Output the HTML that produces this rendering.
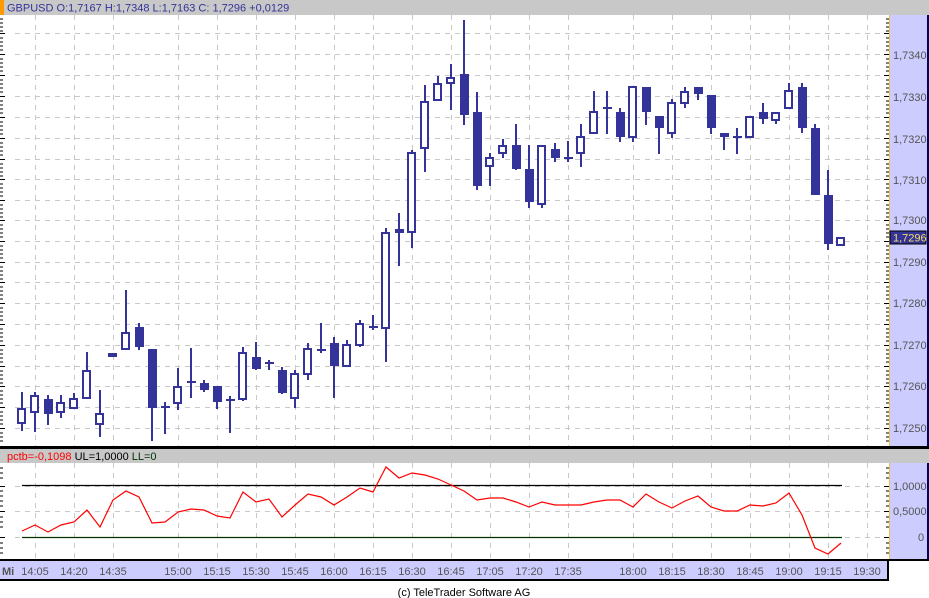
<!DOCTYPE html>
<html><head><meta charset="utf-8"><style>
body{margin:0;width:929px;height:598px;background:#fff;overflow:hidden;font-family:"Liberation Sans",sans-serif;}
</style></head><body>
<svg width="929" height="598" xmlns="http://www.w3.org/2000/svg" style="position:absolute;left:0;top:0">
<!-- header bars -->
<rect x="0" y="0" width="929" height="15" fill="#c8c8c8"/>
<rect x="0" y="0" width="4" height="15" fill="#ff9900"/>
<text x="7" y="11.5" font-size="11" fill="#333399" font-family="Liberation Sans">GBPUSD O:1,7167 H:1,7348 L:1,7163 C: 1,7296 +0,0129</text>
<!-- right axis -->
<rect x="889" y="15" width="38" height="432" fill="#ccccff"/>
<rect x="889" y="463" width="38" height="97" fill="#ccccff"/>
<line x1="889.5" y1="15" x2="889.5" y2="447" stroke="#f0c040"/>
<line x1="889.5" y1="463" x2="889.5" y2="560" stroke="#f0c040"/>
<rect x="927" y="15" width="2" height="546" fill="#000066"/>
<!-- grid -->
<g stroke="#c8c8c8" stroke-dasharray="5,5" stroke-width="1">
<path d="M15 33.5H888M15 54.5H888M15 75.5H888M15 96.5H888M15 117.5H888M15 138.5H888M15 159.5H888M15 179.5H888M15 200.5H888M15 220.5H888M15 241.5H888M15 262.5H888M15 282.5H888M15 303.5H888M15 324.5H888M15 345.5H888M15 366.5H888M15 386.5H888M15 407.5H888M15 428.5H888"/>
<path d="M15 486.5H888M15 511.5H888M15 537.5H888"/>
<path d="M35.5 15V446M74.5 15V446M113.5 15V446M178.5 15V446M217.5 15V446M256.5 15V446M295.5 15V446M334.5 15V446M373.5 15V446M412.5 15V446M451.5 15V446M490.5 15V446M529.5 15V446M568.5 15V446M633.5 15V446M672.5 15V446M711.5 15V446M750.5 15V446M789.5 15V446M828.5 15V446M867.5 15V446"/>
<path d="M35.5 463V560M74.5 463V560M113.5 463V560M178.5 463V560M217.5 463V560M256.5 463V560M295.5 463V560M334.5 463V560M373.5 463V560M412.5 463V560M451.5 463V560M490.5 463V560M529.5 463V560M568.5 463V560M633.5 463V560M672.5 463V560M711.5 463V560M750.5 463V560M789.5 463V560M828.5 463V560M867.5 463V560"/>
</g>
<!-- left ticks -->
<g stroke="#000" stroke-width="1">
<path d="M0 19H3M0 23H3M0 27H3M0 31H3M0 33.5H5M0 38H3M0 42H3M0 46H3M0 50H3M0 54.5H5M0 59H3M0 63H3M0 67H3M0 71H3M0 75.5H5M0 80H3M0 84H3M0 88H3M0 92H3M0 96.5H5M0 101H3M0 105H3M0 109H3M0 113H3M0 117.5H5M0 122H3M0 126H3M0 130H3M0 134H3M0 138.5H5M0 143H3M0 147H3M0 151H3M0 155H3M0 159.5H5M0 164H3M0 168H3M0 172H3M0 176H3M0 179.5H5M0 184H3M0 188H3M0 192H3M0 196H3M0 200.5H5M0 205H3M0 209H3M0 213H3M0 217H3M0 220.5H5M0 225H3M0 229H3M0 233H3M0 237H3M0 241.5H5M0 246H3M0 250H3M0 254H3M0 258H3M0 262.5H5M0 267H3M0 271H3M0 275H3M0 279H3M0 282.5H5M0 287H3M0 291H3M0 295H3M0 299H3M0 303.5H5M0 308H3M0 312H3M0 316H3M0 320H3M0 324.5H5M0 329H3M0 333H3M0 337H3M0 341H3M0 345.5H5M0 350H3M0 354H3M0 358H3M0 362H3M0 366.5H5M0 371H3M0 375H3M0 379H3M0 383H3M0 386.5H5M0 391H3M0 395H3M0 399H3M0 403H3M0 407.5H5M0 412H3M0 416H3M0 420H3M0 424H3M0 428.5H5M0 433H3M0 437H3M0 441H3"/>
<path d="M0 468H3M0 473H3M0 478H3M0 486.5H5M0 491H3M0 496H3M0 501H3M0 506H3M0 511.5H5M0 517H3M0 522H3M0 527H3M0 537.5H5M0 543H3M0 548H3M0 553H3"/>
<path d="M886 19H889M886 23H889M886 27H889M886 31H889M884 33.5H889M886 38H889M886 42H889M886 46H889M886 50H889M884 54.5H889M886 59H889M886 63H889M886 67H889M886 71H889M884 75.5H889M886 80H889M886 84H889M886 88H889M886 92H889M884 96.5H889M886 101H889M886 105H889M886 109H889M886 113H889M884 117.5H889M886 122H889M886 126H889M886 130H889M886 134H889M884 138.5H889M886 143H889M886 147H889M886 151H889M886 155H889M884 159.5H889M886 164H889M886 168H889M886 172H889M886 176H889M884 179.5H889M886 184H889M886 188H889M886 192H889M886 196H889M884 200.5H889M886 205H889M886 209H889M886 213H889M886 217H889M884 220.5H889M886 225H889M886 229H889M886 233H889M886 237H889M884 241.5H889M886 246H889M886 250H889M886 254H889M886 258H889M884 262.5H889M886 267H889M886 271H889M886 275H889M886 279H889M884 282.5H889M886 287H889M886 291H889M886 295H889M886 299H889M884 303.5H889M886 308H889M886 312H889M886 316H889M886 320H889M884 324.5H889M886 329H889M886 333H889M886 337H889M886 341H889M884 345.5H889M886 350H889M886 354H889M886 358H889M886 362H889M884 366.5H889M886 371H889M886 375H889M886 379H889M886 383H889M884 386.5H889M886 391H889M886 395H889M886 399H889M886 403H889M884 407.5H889M886 412H889M886 416H889M886 420H889M886 424H889M884 428.5H889M886 433H889M886 437H889M886 441H889"/>
<path d="M886 468H889M886 473H889M886 478H889M884 486.5H889M886 491H889M886 496H889M886 501H889M886 506H889M884 511.5H889M886 517H889M886 522H889M886 527H889M884 537.5H889M886 543H889M886 548H889M886 553H889"/>
</g>
<!-- axis labels -->
<g font-size="11" fill="#555" font-family="Liberation Sans">
<text x="893" y="59">1,7340</text><text x="893" y="101">1,7330</text><text x="893" y="143">1,7320</text><text x="893" y="184">1,7310</text><text x="893" y="224">1,7300</text><text x="893" y="266">1,7290</text><text x="893" y="307">1,7280</text><text x="893" y="349">1,7270</text><text x="893" y="390">1,7260</text><text x="893" y="432">1,7250</text>
<text x="893" y="490">1,0000</text><text x="893" y="515">0,5000</text><text x="918" y="541">0</text>
</g>
<rect x="890" y="231" width="36" height="13" fill="#333399" stroke="#000" stroke-width="1"/>
<text x="893" y="241.5" font-size="11" fill="#f0e060" font-family="Liberation Sans">1,7296</text>
<!-- candles -->
<g fill="#333399" stroke="none">
<!-- wicks -->
<path d="M21 392h2v39h-2zM34 392h2v40h-2zM47 395h2v30h-2zM60 395h2v23h-2zM73 393h2v16h-2zM86 352h2v47h-2zM99 390h2v47h-2zM125 290h2v60h-2zM138 323h2v27h-2zM151 349h2v92h-2zM164 402h2v32h-2zM177 368h2v42h-2zM190 348h2v50h-2zM203 380h2v12h-2zM216 386h2v23h-2zM229 396h2v37h-2zM242 347h2v54h-2zM255 342h2v28h-2zM268 360h2v10h-2zM281 367h2v27h-2zM294 370h2v38h-2zM307 343h2v37h-2zM320 323h2v30h-2zM333 337h2v61h-2zM346 340h2v27h-2zM359 320h2v27h-2zM372 315h2v15h-2zM385 228h2v134h-2zM398 213h2v53h-2zM411 150h2v98h-2zM424 85h2v87h-2zM437 76h2v25h-2zM450 64h2v46h-2zM463 20h2v105h-2zM476 92h2v98h-2zM489 153h2v33h-2zM502 139h2v19h-2zM515 124h2v46h-2zM528 145h2v63h-2zM541 145h2v63h-2zM554 143h2v19h-2zM567 141h2v21h-2zM580 124h2v43h-2zM593 91h2v43h-2zM606 91h2v43h-2zM619 108h2v34h-2zM632 86h2v56h-2zM645 87h2v38h-2zM658 116h2v38h-2zM671 99h2v39h-2zM684 87h2v21h-2zM697 87h2v13h-2zM710 95h2v39h-2zM723 133h2v17h-2zM736 128h2v26h-2zM749 116h2v21h-2zM762 103h2v21h-2zM775 112h2v12h-2zM788 83h2v25h-2zM801 83h2v50h-2zM814 124h2v71h-2zM827 170h2v80h-2z"/>
<!-- filled bodies -->
<path d="M44 399h9v15h-9zM108 353h9v4h-9zM135 327h9v20h-9zM148 349h9v59h-9zM200 383h9v7h-9zM213 386h9v16h-9zM252 357h9v12h-9zM278 370h9v23h-9zM330 343h9v23h-9zM395 229h9v4h-9zM460 74h9v41h-9zM473 112h9v74h-9zM512 145h9v24h-9zM525 169h9v33h-9zM551 149h9v9h-9zM616 112h9v25h-9zM642 87h9v25h-9zM655 116h9v12h-9zM694 87h9v7h-9zM707 95h9v33h-9zM720 133h9v4h-9zM759 112h9v7h-9zM798 87h9v41h-9zM811 128h9v67h-9zM824 195h9v49h-9z"/>
<!-- dojis -->
<path d="M161 406h9v2h-9zM187 381h9v2h-9zM226 399h9v2h-9zM265 362h9v2h-9zM317 349h9v2h-9zM369 326h9v2h-9zM564 157h9v2h-9zM603 107h9v2h-9zM733 136h9v2h-9z"/>
</g>
<g fill="#fff" stroke="#333399" stroke-width="2">
<rect x="18" y="409" width="7" height="14"/><rect x="31" y="396" width="7" height="16"/><rect x="57" y="403" width="7" height="9"/><rect x="70" y="399" width="7" height="9"/><rect x="83" y="371" width="7" height="27"/><rect x="96" y="414" width="7" height="10"/><rect x="122" y="333" width="7" height="16"/><rect x="174" y="387" width="7" height="16"/><rect x="239" y="353" width="7" height="46"/><rect x="291" y="374" width="7" height="24"/><rect x="304" y="349" width="7" height="25"/><rect x="343" y="345" width="7" height="21"/><rect x="356" y="324" width="7" height="21"/><rect x="382" y="233" width="7" height="95"/><rect x="408" y="153" width="7" height="79"/><rect x="421" y="102" width="7" height="46"/><rect x="434" y="84" width="7" height="16"/><rect x="447" y="78" width="7" height="5"/><rect x="486" y="158" width="7" height="8"/><rect x="499" y="146" width="7" height="7"/><rect x="538" y="146" width="7" height="58"/><rect x="577" y="137" width="7" height="16"/><rect x="590" y="112" width="7" height="21"/><rect x="629" y="87" width="7" height="50"/><rect x="668" y="103" width="7" height="30"/><rect x="681" y="92" width="7" height="11"/><rect x="746" y="117" width="7" height="20"/><rect x="772" y="113" width="7" height="7"/><rect x="785" y="91" width="7" height="17"/><rect x="837" y="238" width="7" height="7"/>
</g>
<!-- separator -->
<rect x="0" y="446" width="929" height="3" fill="#000"/>
<rect x="0" y="449" width="929" height="14" fill="#c8c8c8"/>
<text x="7" y="460" font-size="11" font-family="Liberation Sans"><tspan fill="#ff0000">pctb=-0,1098</tspan><tspan fill="#000"> UL=1,0000</tspan><tspan fill="#003300"> LL=0</tspan></text>
<!-- indicator -->
<line x1="22" y1="485.5" x2="842" y2="485.5" stroke="#000" stroke-width="1.3"/>
<line x1="22" y1="537.5" x2="842" y2="537.5" stroke="#003300" stroke-width="1.3"/>
<polyline fill="none" stroke="#ff0000" stroke-width="1.2" points="22,531 35,525 48,532 61,525 74,522 87,510 100,527 113,500 126,491 139,497 152,523 165,522 178,512 191,509 204,510 217,516 230,518 243,492 256,502 269,499 282,517 295,505 308,494 321,497 334,505 347,497 360,488 373,492 386,467 399,478 412,473 425,475 438,479 451,485 464,491 477,500 490,498 503,498 516,502 529,507 542,502 555,505 568,505 581,505 594,502 607,500 620,500 633,507 646,494 659,502 672,508 685,501 698,496 711,507 724,511 737,511 750,505 763,506 776,503 789,493 802,515 815,548 828,554 841,543"/>
<!-- bottom axis -->
<rect x="0" y="559" width="889" height="2" fill="#000"/>
<rect x="0" y="561" width="888" height="19" fill="#ccccff"/>
<rect x="887" y="559" width="2" height="22" fill="#000"/>
<rect x="0" y="579" width="889" height="2" fill="#000"/>
<rect x="888" y="559" width="41" height="2" fill="#000"/>
<text x="2" y="575" font-size="11" font-weight="bold" fill="#555" font-family="Liberation Sans">Mi</text>
<g font-size="11" fill="#555" font-family="Liberation Sans" text-anchor="middle">
<text x="35" y="575">14:05</text><text x="74" y="575">14:20</text><text x="113" y="575">14:35</text><text x="178" y="575">15:00</text><text x="217" y="575">15:15</text><text x="256" y="575">15:30</text><text x="295" y="575">15:45</text><text x="334" y="575">16:00</text><text x="373" y="575">16:15</text><text x="412" y="575">16:30</text><text x="451" y="575">16:45</text><text x="490" y="575">17:05</text><text x="529" y="575">17:20</text><text x="568" y="575">17:35</text><text x="633" y="575">18:00</text><text x="672" y="575">18:15</text><text x="711" y="575">18:30</text><text x="750" y="575">18:45</text><text x="789" y="575">19:00</text><text x="828" y="575">19:15</text><text x="867" y="575">19:30</text>
</g>
<text x="464" y="596" font-size="11" fill="#000" text-anchor="middle" font-family="Liberation Sans">(c) TeleTrader Software AG</text>
</svg>
</body></html>
